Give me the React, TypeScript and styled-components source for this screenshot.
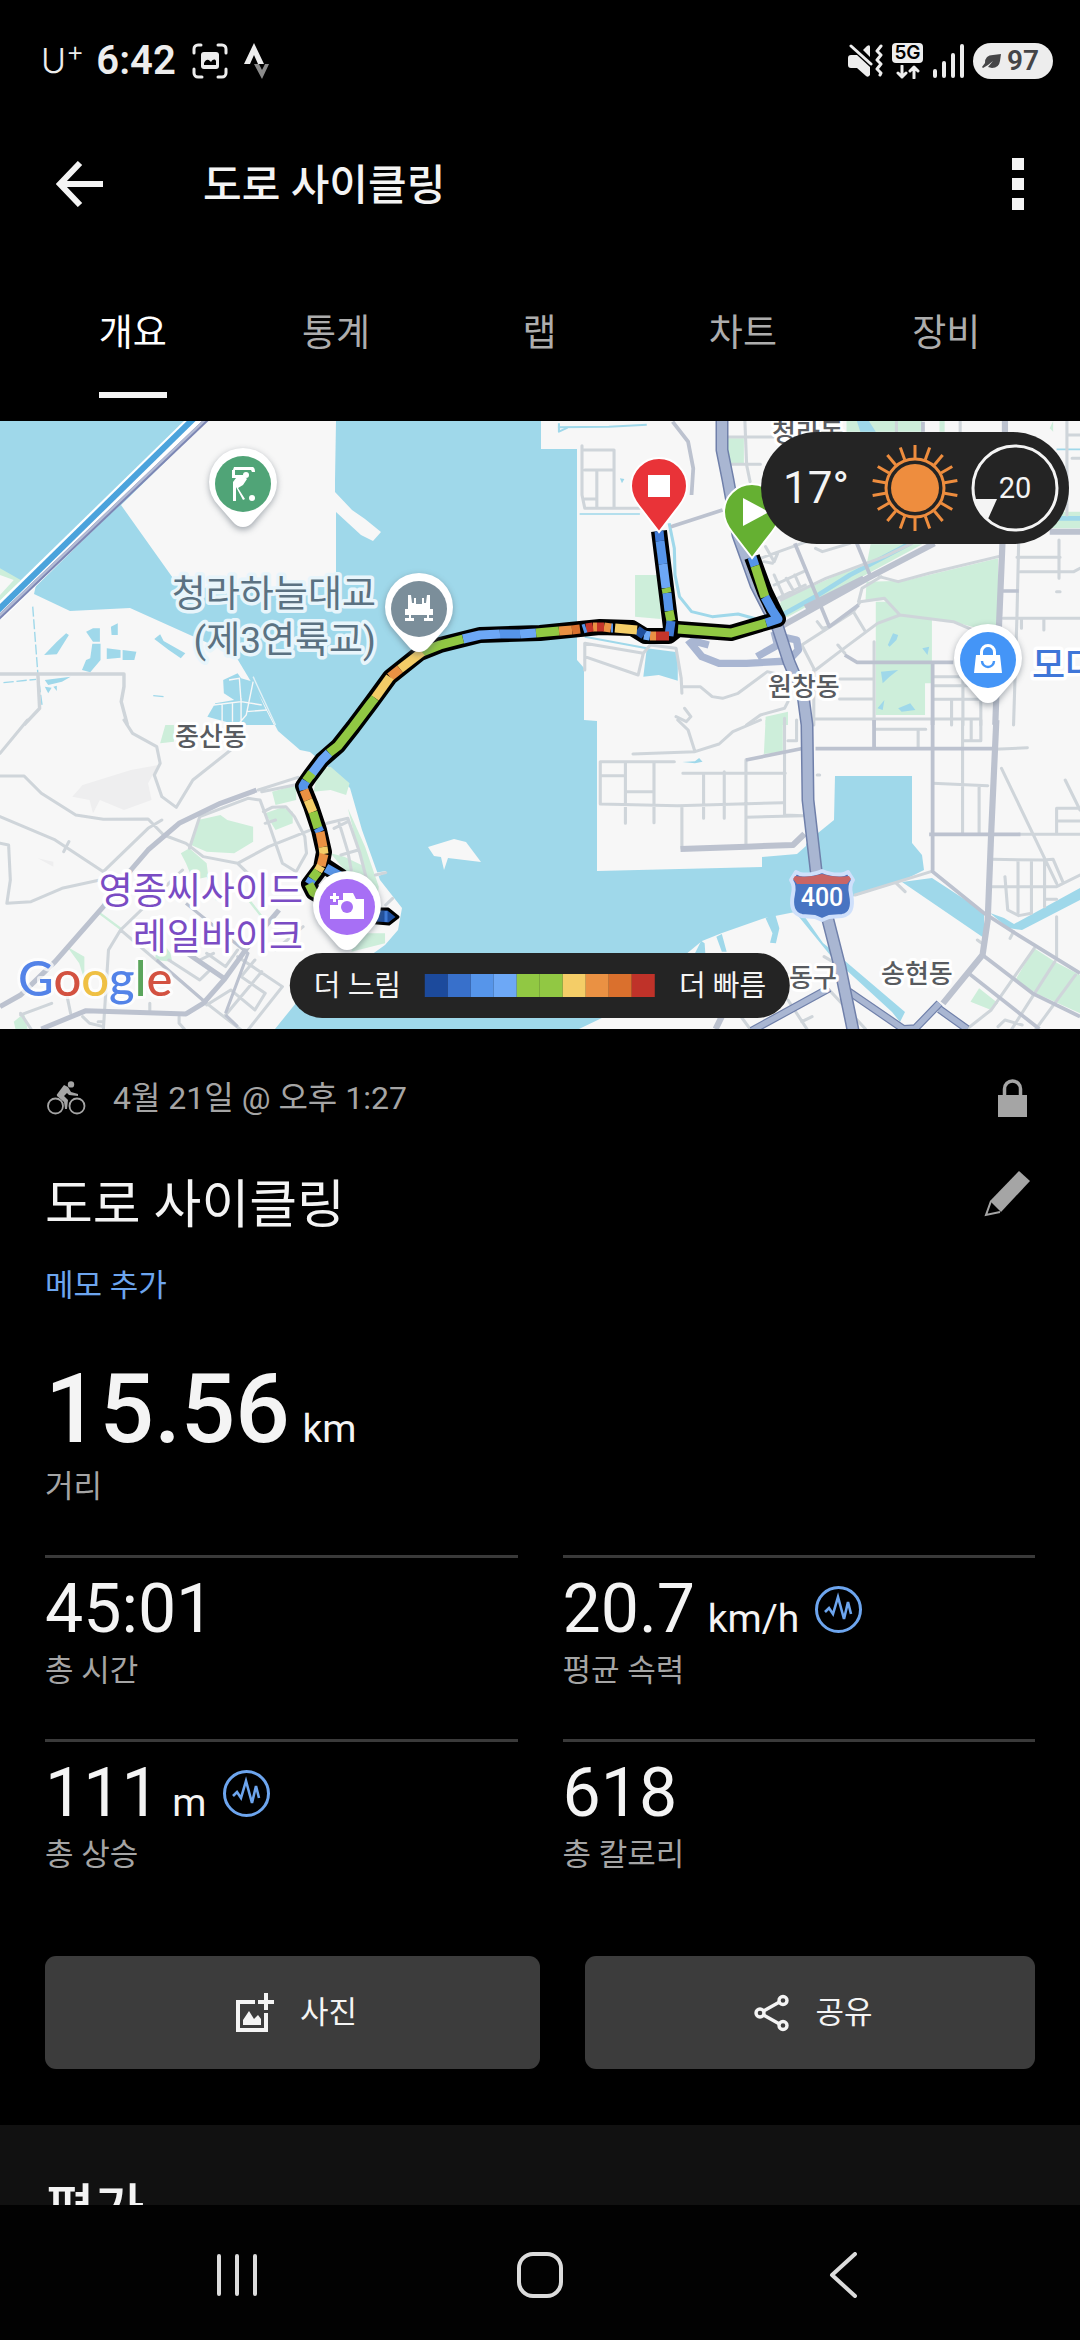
import React from "react";
import styled, { createGlobalStyle } from "styled-components";

const SANS = `Roboto, "Noto Sans CJK KR", sans-serif`;

const GlobalStyle = createGlobalStyle`
  *, *::before, *::after { box-sizing: border-box; }
  body { margin: 0; background: #000; color: #f4f4f4; font-family: ${SANS}; }
  button { font: inherit; color: inherit; background: none; border: 0; padding: 0; cursor: pointer; }
  h1, h2, p, dl, dt, dd { margin: 0; font-weight: inherit; font-size: inherit; }
  svg { display: block; flex: none; }
`;

const Screen = styled.div`
  display: flex;
  flex-direction: column;
  height: 100vh;
  overflow: hidden;
  background: #000;
`;

/* ---------- status bar ---------- */

const StatusBar = styled.div`
  flex: none;
  display: flex;
  align-items: center;
  justify-content: space-between;
  height: 102px;
  padding: 20px 27px 0 41px;
  color: #ededed;
`;

const StatusGroup = styled.div<{ $gap: number }>`
  display: flex;
  align-items: center;
  gap: ${(p) => p.$gap}px;
`;

const Carrier = styled.span`
  display: flex;
  font: 300 34px/44px Inter, sans-serif;
  margin-right: -4px;

  sup {
    font-size: 28px;
    line-height: 24px;
  }
`;

const Clock = styled.span`
  font: 600 40px/44px Roboto, sans-serif;
`;

const NetworkBadge = styled.span`
  display: flex;
  flex-direction: column;
  align-items: center;
  gap: 2px;

  b {
    width: 31px;
    border-radius: 4px;
    background: #ededed;
    color: #000;
    font: 600 19px/20px Inter, sans-serif;
    text-align: center;
  }
`;

const Battery = styled.span`
  display: flex;
  align-items: center;
  gap: 5px;
  height: 36px;
  padding: 0 14px 0 9px;
  border-radius: 18px;
  background: #ededed;
  color: #454547;
  font: 600 28px/36px Roboto, sans-serif;
`;

/* ---------- app bar and tabs ---------- */

const AppBar = styled.header`
  flex: none;
  display: flex;
  align-items: center;
  height: 164px;
  padding: 0 56px;
`;

const AppTitle = styled.h1`
  flex: 1;
  margin-left: 100px;
  padding-top: 4px;
  font-size: 42px;
  font-weight: 500;
  line-height: 60px;
`;

const IconButton = styled.button`
  display: flex;
  align-items: center;
  justify-content: center;
`;

const Tabs = styled.nav`
  flex: none;
  display: grid;
  grid-template-columns: repeat(5, 1fr);
  justify-items: center;
  height: 155px;
  padding: 41px 32px 0 31px;
`;

const Tab = styled.button<{ $active?: boolean }>`
  align-self: start;
  padding-bottom: 31px;
  border-bottom: 6px solid ${(p) => (p.$active ? "#f4f4f4" : "transparent")};
  color: ${(p) => (p.$active ? "#ffffff" : "#adadad")};
  font-size: 37px;
  line-height: 54px;
`;

/* ---------- map ---------- */

const MapPanel = styled.section`
  position: relative;
  flex: none;
  height: 608px;
  overflow: hidden;
  background: #f7f7f7;
`;

const MapCanvas = styled.svg`
  width: 100%;
  height: 100%;
  font-family: ${SANS};
`;

const Weather = styled.div`
  position: absolute;
  top: 11px;
  right: 11px;
  display: flex;
  align-items: center;
  height: 112px;
  padding: 0 10px 0 22px;
  border-radius: 56px;
  background: #242424;
`;

const Temperature = styled.span`
  width: 88px;
  font-size: 44px;
  line-height: 52px;
`;

const Wind = styled.span`
  display: grid;
  place-items: center;
  margin-left: 12px;
  font-size: 29px;
  line-height: 34px;

  > * {
    grid-area: 1 / 1;
  }
`;

const Legend = styled.div`
  position: absolute;
  bottom: 11px;
  left: 50%;
  display: flex;
  align-items: center;
  gap: 24px;
  height: 65px;
  padding: 0 24px;
  border-radius: 33px;
  background: #242424;
  font-size: 29px;
  line-height: 40px;
  white-space: nowrap;
  transform: translateX(-50%);
`;

const Scale = styled.span`
  display: flex;
`;

const Swatch = styled.i<{ $color: string }>`
  width: 23px;
  height: 23px;
  background: ${(p) => p.$color};
`;

/* ---------- activity details ---------- */

const Details = styled.main`
  flex: 1;
  min-height: 0;
  overflow: hidden;
`;

const Summary = styled.section`
  padding: 45px 45px 56px;
`;

const Row = styled.div`
  display: flex;
  align-items: center;
  justify-content: space-between;
`;

const Meta = styled.p`
  display: flex;
  align-items: center;
  gap: 27px;
  padding-left: 2px;
  color: #a5a5a5;
  font-size: 32px;
  line-height: 48px;
`;

const IconSlot = styled.span<{ $right: number; $lift?: number }>`
  display: flex;
  padding: 0 ${(p) => p.$right}px ${(p) => p.$lift ?? 0}px 0;
`;

const ActivityName = styled.h2`
  font-size: 52px;
  line-height: 72px;
`;

const TitleRow = styled(Row)`
  margin-top: 48px;
`;

const NoteButton = styled.button`
  display: block;
  margin-top: 22px;
  color: #6da5ee;
  font-size: 31px;
  line-height: 44px;
`;

const Stat = styled.div`
  display: flex;
  flex-direction: column-reverse;
  justify-content: flex-end;
`;

const StatLabel = styled.dt`
  color: #a5a5a5;
  font-size: 31px;
  line-height: 44px;
`;

const Distance = styled.dd`
  font-size: 96px;
  font-weight: 500;
  line-height: 112px;
`;

const Value = styled.dd`
  display: flex;
  align-items: baseline;
  font-size: 68px;
  line-height: 80px;

  button {
    align-self: center;
    margin-left: 16px;
  }
`;

const Unit = styled.span`
  margin-left: 3px;
  font-size: 39px;
  font-weight: 400;
  line-height: 40px;
  white-space: pre;
`;

const Headline = styled.dl`
  margin-top: 45px;
`;

const StatGrid = styled.dl`
  display: grid;
  grid-template-columns: 1fr 1fr;
  grid-auto-rows: 184px;
  column-gap: 45px;
  margin-top: 46px;

  ${Stat} {
    padding-top: 11px;
    border-top: 3px solid #3a3a3a;
  }
`;

const Actions = styled.div`
  display: grid;
  grid-template-columns: 11fr 10fr;
  gap: 45px;
  margin-top: 33px;
`;

const ActionButton = styled.button`
  display: flex;
  align-items: center;
  justify-content: center;
  gap: 26px;
  height: 113px;
  padding-left: 7px;
  border-radius: 11px;
  background: #3c3c3c;
  font-size: 31px;
  line-height: 44px;
`;

const Rating = styled.section`
  min-height: 200px;
  padding: 48px 45px;
  background: #111111;
`;

const RatingTitle = styled.h2`
  font-size: 54px;
  font-weight: 500;
  line-height: 76px;
`;

const SystemNav = styled.footer`
  flex: none;
  display: grid;
  grid-template-columns: repeat(3, 303px);
  justify-content: center;
  align-items: center;
  height: 135px;
  padding-top: 4px;
  background: #020202;
`;

/* ---------- icons ---------- */

const CaptureIcon = () => (
  <svg width="36" height="36" viewBox="0 0 36 36" fill="none" stroke="#ededed" strokeWidth="3" strokeLinecap="round">
    <path d="M2 10V6a4 4 0 0 1 4-4h3M26 2h4a4 4 0 0 1 4 4v4M34 26v4a4 4 0 0 1-4 4h-4M10 34H6a4 4 0 0 1-4-4v-4" />
    <rect x="9" y="9" width="18" height="17" rx="3" fill="#ededed" stroke="none" />
    <path d="M12 22v-2c2-4 4-4 6-2l1 1c2-3 4-3 5-1v4z" fill="#000" stroke="none" />
  </svg>
);

const StravaIcon = () => (
  <svg width="26" height="36" viewBox="0 0 26 36">
    <path d="M10 0l10 21h-6l-4-9-4 9H0z" fill="#ededed" />
    <path d="M10 21h5l3 6 3-6h4l-7 15z" fill="#8a8a8a" />
  </svg>
);

const MuteIcon = () => (
  <svg width="36" height="34" viewBox="0 0 36 34" fill="#ededed">
    <path d="M1 14q0-3 3-3h6l13 12v8q-2 3-4 1l-9-8H4q-3 0-3-3z" />
    <path d="M16 6l4-4q3-2 3 1v10z" />
    <path d="M4 2l20 18" stroke="#ededed" strokeWidth="3" strokeLinecap="round" />
    <path d="M34 2l-4 5 4 4-4 5 4 4-4 5 4 4-1 2" fill="none" stroke="#ededed" strokeWidth="3" strokeLinecap="round" strokeLinejoin="round" />
  </svg>
);

const DataArrows = () => (
  <svg width="24" height="14" viewBox="0 0 24 14" fill="none" stroke="#ededed" strokeWidth="3" strokeLinecap="round" strokeLinejoin="round">
    <path d="M6 1v11M2 8l4 4 4-4M18 13V2M14 6l4-4 4 4" />
  </svg>
);

const SignalIcon = () => (
  <svg width="32" height="34" viewBox="0 0 32 34" stroke="#ededed" strokeWidth="4" strokeLinecap="round">
    <path d="M3 27v5M12 19v13M21 11v21M30 2v30" />
  </svg>
);

const LeafIcon = () => (
  <svg width="20" height="15" viewBox="0 0 20 15">
    <path d="M3 9Q3 1 11 1l8-1-1 7q-1 7-8 7l-4-1 5-6-5 4-5 3-1-1z" fill="#454547" />
  </svg>
);

const BackIcon = () => (
  <svg width="47" height="46" viewBox="0 0 47 46" fill="none" stroke="#f4f4f4" strokeWidth="6">
    <path d="M24 2L4 23l20 21M4 23h43" />
  </svg>
);

const MoreIcon = () => (
  <svg width="12" height="52" viewBox="0 0 12 52" fill="#f4f4f4">
    <path d="M0 0h12v12H0zM0 20h12v12H0zM0 40h12v12H0z" />
  </svg>
);

const SunIcon = () => (
  <svg width="88" height="88" viewBox="-44 -44 88 88" stroke="#ee8d3e" fill="none">
    <circle r="24" fill="#ee8d3e" stroke="none" />
    <circle r="29" strokeWidth="3" />
    {Array.from({ length: 18 }, (_, i) => (
      <path key={i} d="M0-30V-43" strokeWidth="3" transform={`rotate(${i * 20})`} />
    ))}
  </svg>
);

const CompassIcon = () => (
  <svg width="88" height="88" viewBox="-44 -44 88 88">
    <circle r="42" fill="none" stroke="#f4f4f4" strokeWidth="3" />
    <path d="M-41 11H-18L-27 31Q-37 24-41 11z" fill="#f4f4f4" />
  </svg>
);

const BikeIcon = () => (
  <svg width="39" height="34" viewBox="0 0 39 34" fill="none" stroke="#a5a5a5">
    <circle cx="8.5" cy="25" r="7.5" strokeWidth="1.8" />
    <circle cx="30" cy="25" r="7.5" strokeWidth="1.8" />
    <circle cx="24" cy="3.4" r="3.2" fill="#a5a5a5" stroke="none" />
    <path d="M17 4l4 2 3 5 7 2v2l-9-1-2-2-3 3 4 4-1 9h-2l-1-7-7-6q-1-1 1-3z" fill="#a5a5a5" stroke="none" />
  </svg>
);

const LockIcon = () => (
  <svg width="29" height="38" viewBox="0 0 29 38">
    <path d="M0 16h29v22H0z" fill="#a5a5a5" />
    <path d="M6.500 18v-8a8 8 0 0 1 16 0v8" fill="none" stroke="#a5a5a5" strokeWidth="3.500" />
  </svg>
);

const PencilIcon = () => (
  <svg width="46" height="46" viewBox="0 0 46 46">
    <path d="M35 0l11 10-29 31-11-11z" fill="#a5a5a5" />
    <path d="M7 30L2 44l14-3" fill="none" stroke="#a5a5a5" strokeWidth="2" />
  </svg>
);

const PulseIcon = () => (
  <svg width="47" height="47" viewBox="0 0 47 47" fill="none" stroke="#6da5ee" strokeWidth="3">
    <circle cx="23.500" cy="23.500" r="22" />
    <path d="M10 26l4-4 4 6 5-17 6 22 4-17 3 12" strokeWidth="2.600" />
  </svg>
);

const PhotoIcon = () => (
  <svg width="39" height="40" viewBox="0 0 39 40" fill="none" stroke="#f4f4f4" strokeWidth="4">
    <path d="M20 9H3v28h28V20" />
    <path d="M31 0v17M23 9h16" />
    <path d="M8 32v-5l6-9 5 8 4-4 3 4v6z" fill="#f4f4f4" stroke="none" />
  </svg>
);

const ShareIcon = () => (
  <svg width="35" height="38" viewBox="0 0 35 38" fill="none" stroke="#f4f4f4" strokeWidth="3.400">
    <circle cx="29" cy="6.500" r="4" />
    <circle cx="6" cy="19" r="4" />
    <circle cx="29" cy="31.500" r="4" />
    <path d="M9.500 17l16-9M9.500 21l16 9" />
  </svg>
);

const navStroke = { fill: "none", stroke: "#dcdcdc", strokeWidth: 4, strokeLinecap: "round" } as const;

/* ---------- map drawing ---------- */

const BLUE_DARK = "#1f4f9e";
const BLUE_MID = "#3f7ad6";
const BLUE = "#5695ea";
const BLUE_LIGHT = "#6da8f6";
const GREEN = "#91c843";
const YELLOW = "#f4cd67";
const ORANGE = "#ea9143";
const RUST = "#da702d";
const RED = "#c5352a";

const speedScale = ["#1c4a9c", "#3870cb", BLUE, BLUE_LIGHT, GREEN, GREEN, YELLOW, ORANGE, RUST, "#bf3229"];

const routeOutline = [
  "M659 531L671 628L669 636",
  "M752 557L765 592L778 619L731 633L678 629L669 636L645 636L632 628L600 627L540 633L480 635L440 645L420 653L390 677L371 703L353 727L338 746L322 760L310 776L303 786L311 806L319 830L324 852L321 868L309 884L313 892L330 902L360 915",
  "M325 866L340 876L352 886",
];

const routePieces: [string, string][] = [
  [BLUE_MID, "M659 531L660 541"],
  [BLUE, "M660 541L663 564"],
  [BLUE_LIGHT, "M663 564L666 588"],
  [GREEN, "M666 588L667 593"],
  [BLUE, "M667 593L669 611"],
  [GREEN, "M669 611L671 621"],
  [BLUE, "M752 557L755 566"],
  [GREEN, "M755 566L765 597"],
  [BLUE, "M765 597L772 610L778 619L766 623"],
  [GREEN, "M766 623L731 633L678 629"],
  [BLUE_MID, "M671 621L669 636"],
  [RED, "M669 636L656 636"],
  [ORANGE, "M656 636L650 636"],
  [BLUE_LIGHT, "M650 636L644 635"],
  [BLUE_DARK, "M644 635L637 630"],
  [YELLOW, "M637 630L615 628"],
  [BLUE, "M613 628L611 628"],
  [ORANGE, "M611 628L604 627"],
  [RED, "M604 627L597 627"],
  [ORANGE, "M597 627L593 627"],
  [RED, "M593 627L586 628"],
  [BLUE, "M586 628L583 629"],
  [RUST, "M580 629L572 630"],
  [ORANGE, "M572 630L559 631"],
  [GREEN, "M559 631L536 633"],
  [BLUE_LIGHT, "M536 633L520 634"],
  [BLUE, "M520 634L500 634"],
  [BLUE_LIGHT, "M500 634L480 635L463 639"],
  [GREEN, "M463 639L440 645L422 652"],
  [YELLOW, "M422 652L400 669"],
  [ORANGE, "M400 669L390 677"],
  [YELLOW, "M390 677L375 698"],
  [GREEN, "M375 698L371 703L353 727L338 746L329 753"],
  [BLUE_LIGHT, "M329 753L322 760L310 776"],
  [GREEN, "M312 773L306 781"],
  [BLUE, "M306 781L303 786L304 790"],
  [ORANGE, "M304 790L308 800"],
  [YELLOW, "M308 800L313 812"],
  [GREEN, "M313 812L318 828"],
  [BLUE, "M318 828L320 832"],
  [ORANGE, "M320 832L323 847"],
  [YELLOW, "M323 847L324 854"],
  [ORANGE, "M324 854L321 866"],
  [YELLOW, "M321 866L318 871"],
  [GREEN, "M318 871L312 879"],
  [BLUE, "M312 879L309 884"],
  [GREEN, "M309 884L313 892L330 902"],
  [BLUE, "M326 868L340 876"],
  [GREEN, "M340 876L352 886"],
];

const Pin = ({ x, y, color, children }: { x: number; y: number; color: string; children: React.ReactNode }) => (
  <g transform={`translate(${x} ${y})`}>
    <path d="M0 46q-8 0-12-7L-24 24A34 34 0 1 1 24 24L12 39Q8 46 0 46z" fill="#55606c" opacity="0.5" filter="url(#shade)" />
    <path d="M0 43q-6 0-10-5L-24 22A34 34 0 1 1 24 22L10 38Q6 43 0 43z" fill="#fff" />
    <circle r="28" fill={color} />
    <g fill="#fff">{children}</g>
  </g>
);

const Flag = ({ x, y, color, children }: { x: number; y: number; color: string; children: React.ReactNode }) => (
  <g transform={`translate(${x} ${y})`}>
    <path d="M0 46L-20 20Q-28 10-28 0A28 28 0 0 1 28 0Q28 10 20 20z" fill={color} stroke="#fff" strokeWidth="2" />
    {children}
  </g>
);

const ActivityMap = () => (
  <MapCanvas viewBox="0 421 1080 608" preserveAspectRatio="xMidYMid slice" role="img" aria-label="지도">
    <defs>
      <filter id="shade" x="-30%" y="-30%" width="160%" height="160%">
        <feGaussianBlur stdDeviation="3" />
      </filter>
    </defs>
    <rect x="0" y="421" width="1080" height="608" fill="#f7f7f7" />

    {/* sea and basins */}
    <g fill="#9fd8ea">
      <path d="M0 421H541V449H577V660L584 668V720L597 721V871L762 867V857L797 854L806 846V844L818 833L834 820L835 776H912V843L922 855L924 870L900 882L855 896L800 910L823 943L838 955L905 1012L900 1022L892 1012L830 955L795 912L765 918L722 933L702 941L685 955L660 990L579 1029H275L296 1003L350 970L385 945L398 930L402 908L380 880L362 830L350 788L328 767L310 752L300 750L278 731L262 700L235 655L190 635L130 608L70 611L34 594L36 585L0 600z" />
      <path d="M902 882L932 878L984 912L984 938zM990 913L1004 918L1014 924L1080 888V900L1022 930L1008 928z" />
    </g>
    <g fill="#f7f7f7">
      <path d="M207 421H336L335 480V492L352 510L365 519L381 532L373 541L361 535L336 512V587L180 588L121 505z" />
      <path d="M428 847L454 839L466 842L481 862L448 858L444 870L441 857L434 856z" />
      <path d="M374 873L386 871 386 873 376 877z" />
    </g>

    {/* north-west quarter */}
    <g transform="translate(0 415) scale(.3444 .3333)" fill="none">
      <path d="M0 460L60 495L0 565z" fill="#cdeeda" />
      <path d="M0 480L40 495L0 540z" fill="#f7f7f7" />
      <g fill="#9fd8ea">
        <path d="M128 720L165 680L192 655L200 660L165 718zM250 650L270 640H290V680H270zM268 686H292V735L262 772L238 765L250 735L262 730zM310 700L350 705V728L310 732zM356 705L396 710L390 735H356zM322 635L342 625V660H324zM448 672L465 658L475 678L538 715L525 730L490 705zM130 795L205 785L180 800L140 810zM130 815L150 818L140 835zM155 815L165 812V828z" />
        <path d="M648 795L690 775L700 790L735 800L770 880L795 930H690L602 905L625 865L680 855L650 835z" />
      </g>
      <g stroke="#f7f7f7" strokeWidth="4">
        <path d="M665 795L695 790L700 860L620 870M700 860L760 870M645 865V930M675 865V920M700 850V930M735 800L715 900L690 930M715 890L775 885" />
      </g>
      <path d="M735 785L800 930" stroke="#e2f1f6" strokeWidth="4" />
      <path d="M95 575L110 777L122 870M10 803L105 793M445 842L475 845" stroke="#9fd8ea" strokeWidth="4" strokeDasharray="30 8" />
      <path d="M0 777H360V815L352 860L370 930M110 777L115 880L70 930" stroke="#cfd5da" strokeWidth="10" strokeLinejoin="round" />
      <path d="M-10 598L575 8" stroke="#fff" strokeWidth="44" />
      <path d="M-10 590L565 8" stroke="#4ba3dc" strokeWidth="18" />
      <path d="M-10 614L604 10" stroke="#7c86b4" strokeWidth="13" />
      <path d="M-10 610L600 10" stroke="#b3bbd4" strokeWidth="7" />
    </g>

    {/* north-east quarter */}
    <g transform="translate(540 415) scale(.3444 .3333)" fill="none" strokeLinejoin="round">
      <path
        fill="#cdeeda"
        d="M545 70H592V145H545zM276 480H350V612L276 605zM690 605L700 555L950 440L960 388H1110L720 605zM948 500L1060 497L1330 430V645H1290L1200 620L1045 600L1000 555L945 560zM975 560H1020L1045 600L1138 610V805H1118V900H975zM655 905L720 890V930H655zM890 18H1110V50H890zM1160 18H1175V50H1160zM1480 290H1568V340H1480zM1480 40L1490 18V50z"
      />
      <path
        fill="#9fd8ea"
        d="M310 700L400 712V797L345 780L300 785zM920 18H955L975 50H930zM1010 690L1025 655L1040 660L1035 675L1015 695zM1110 700L1130 695L1125 720zM990 770L1040 765L1015 785L995 805zM980 880L1000 855L995 885zM1040 880L1075 865L1090 885L1050 890zM232 190L245 192 238 205z"
      />
      <g stroke="#9fd8ea">
        <path d="M52 37L200 35L310 29" strokeWidth="6" />
        <path d="M55 25V50L80 38" strokeWidth="6" />
        <path d="M115 297H290M1500 103H1568" strokeWidth="5" />
        <path d="M375 325L390 400L392 480L405 545L440 590L500 605L575 597L650 618" strokeWidth="9" />
        <path d="M130 665L310 700" strokeWidth="6" />
        <path d="M700 602L800 545L900 480L1075 385M1480 310H1568" strokeWidth="14" />
      </g>
      <path
        stroke="#cfd5da"
        strokeWidth="9"
        strokeLinecap="round"
        d="M122 92V240L130 280H290M122 105H215V280M130 165H215M165 165V275M130 252H165M595 20L600 150L610 200M545 66H680M550 148H640M1390 375L1385 600L1375 930M1385 427H1510M1395 470H1550L1568 460M1507 375V490M1345 610H1568M1398 610V640M1463 610V645M655 395L680 440L690 415M650 440L675 445M680 510L765 470M690 550L770 510M680 480L710 550M715 490L740 535M740 480L755 515M640 430L800 370M800 400L820 410L900 385M700 555L830 490L1000 425L1080 385M985 485L1040 500L1130 475L1330 425M925 560L935 520L990 485M760 690L910 590L930 560L1000 550L1045 600L1200 620L1290 660M1045 600L980 625L870 710L800 765M910 590L945 650M865 690L885 715M130 765V685L300 715L285 780L130 725M300 715L320 690L395 700L410 790L412 835M412 815H465L500 845L530 850L575 835L660 770L700 780M420 880L438 905L425 920L395 905M870 792H970M870 852H970M970 680V930M1145 785H1290M1145 812H1290M1145 853H1285M1195 853V930M1228 785V930M1280 790V930M790 912H1280M710 910V930M760 690L795 760V930M720 860L710 880L640 900L600 930M1530 20V300M1545 130H1568M1530 60H1568M805 620L820 640L840 635M1500 530H1510M1035 20V50M1220 20V50"
      />
      <path
        stroke="#bcc2cf"
        strokeWidth="11"
        d="M385 20L430 80L445 160L440 240M380 335L530 285M885 720L920 742H1200M740 385L840 635L925 570M920 385L960 485M1340 528H1390M1140 740V930M1112 20V50"
      />
      <path stroke="#bcc2cf" strokeWidth="18" d="M1350 18V60M1343 380L1330 700L1322 930M690 640L950 490L1145 385M770 578L940 490M1480 350H1568" />
      <path stroke="#a9b6d2" strokeWidth="22" d="M430 675L470 725L520 745H600L720 738L750 705L745 675L700 665M435 675L490 690M630 725L690 690L680 650" />
    </g>

    {/* south-west quarter */}
    <g transform="translate(0 720) scale(.3444 .3333)" fill="none" strokeLinejoin="round">
      <path fill="#eeeeef" d="M210 230L240 195L380 150L460 135L430 190L440 240L360 270L290 240L270 280L260 240zM110 415L155 425V440z" />
      <path
        fill="#cdeeda"
        d="M575 300L640 285L660 300L735 320L735 365L680 400L600 395L555 375zM525 400L550 385L600 430L605 470L560 480L540 430zM790 215L860 195V240L800 255zM770 280L820 262L850 275V310L800 330zM925 150L960 140L1015 190L1005 225L960 210L910 215zM1010 265L1060 380L1100 500L1095 540L1065 480L1040 390zM480 15H505V65L465 70zM195 680L245 710V780L230 730zM960 400L1000 410L1060 440V500L1000 450zM1040 640H1118V670L1020 695zM40 905L70 880L80 927H45zM460 650L495 700L500 725L450 720z"
      />
      <path stroke="#cdeeda" strokeWidth="7" d="M290 580L355 630M700 510L760 590M600 460L630 540" />
      <path
        stroke="#cfd5da"
        strokeWidth="9"
        strokeLinecap="round"
        d="M0 168H70L120 220L220 285L300 298L430 297L475 345L540 370L590 410L690 430L735 475M80 0L0 100M360 0L385 40L455 80L465 130L448 165L470 230L512 262L560 180L670 90M0 290L160 360L300 455M185 395L200 365M0 370L25 375L30 480L20 550L90 545L180 505L290 480M300 455L430 325L470 300M550 385L580 290L720 235L755 240M755 240L780 310L820 430L860 455L890 400L885 350L855 290L830 260L790 262L765 275M770 310L800 300M690 430L780 380L950 310L1010 295L1045 400L1065 480M985 310L1010 395L1020 450M970 325L1010 305M990 405L1040 390M750 210L865 172M760 215L880 190M350 630L600 850L700 930M300 930L315 690L350 630L440 540L530 450M490 720L580 780L605 755M600 700L655 740L690 690M580 720L620 700M820 800L720 930M820 800L690 710M700 770L770 820L740 870M655 885L760 755M600 855L670 810L740 870M700 770L740 720M195 830L205 880M300 905H285M520 890V910L535 927M60 885L150 850M60 880L90 927M435 850V880M1090 465L1120 458M1120 555L1140 535M880 620L800 690M240 890L260 910L300 920"
      />
      <path
        stroke="#bcc2cf"
        strokeWidth="15"
        d="M0 860L60 825L160 725L300 560L380 450L430 390L520 310L640 250L745 210M120 927L250 872L540 882L590 850L650 780L720 680L810 570M530 690L650 775"
      />
      <path stroke="#bcc2cf" strokeWidth="9" d="M455 720L600 850M655 885L690 920M540 550L720 700L655 880" />
    </g>

    {/* south-east quarter */}
    <g transform="translate(540 720) scale(.3444 .3333)" fill="none" strokeLinejoin="round">
      <path
        fill="#cdeeda"
        d="M655 0H705V95L650 102zM1435 685L1495 725L1440 820L1380 780zM1495 725L1568 765V880L1440 820zM1275 805L1330 850L1310 870L1250 845z"
      />
      <path fill="#9fd8ea" d="M413 126L450 124L462 114L472 125L450 130zM655 595L682 580L695 625L685 670L668 668L675 640zM512 650L528 642L542 695H528zM468 662L478 670L480 700H450z" />
      <path
        stroke="#cfd5da"
        strokeWidth="9"
        strokeLinecap="round"
        d="M270 102L450 95L520 72L560 35L640 0M400 0L430 30L450 95M175 125H390M175 125V252M175 167H245M248 125V310M331 125V308M248 215H331M175 252L400 257L705 248M412 257V385M415 160H712M475 160V295M535 155V295M598 120V375M710 0V285L765 287M598 292L765 287M720 62H745V0M975 28H1120M1098 28V85M1227 0V340M1252 0V62M1280 0V62H1232M1140 190L1300 197M1275 197V340M1320 88L1415 83M1340 145L1500 490M1525 180L1568 270M1500 340V265H1568M1500 303H1568M1390 343H1568M1312 418L1460 420L1490 418L1520 490M1388 420V580M1427 425V580M1350 470L1358 570L1390 587L1427 580M1312 500H1500L1568 465M1465 420V560M1500 590V710M1465 538H1500M915 525L1135 455M1035 490L1060 515M1435 685L1310 870L1240 927M1495 725L1370 927M1555 765L1440 927M1330 920L1350 900L1400 915M580 885L610 927M720 840L775 927M840 810L945 927M825 710L850 725M1270 660L1290 675M1365 655L1375 635M760 905L790 890M805 165H812"
      />
      <path
        stroke="#bcc2cf"
        strokeWidth="11"
        d="M800 86H1320M1140 0V455L1290 580L1380 640L1568 760M1130 343H1395M598 120L765 85M970 0V85M1285 705L1430 820L1568 890M1245 760L1450 927"
      />
      <path stroke="#bcc2cf" strokeWidth="18" d="M1325 0L1310 340L1300 600L1285 705L1170 850M408 387L600 380M600 380L735 375L768 342M530 885L510 927" />
      <path stroke="#7080aa" strokeWidth="24" d="M615 932L840 805M890 810L1055 927L1090 925L1160 850M1160 868L1240 927" />
      <path stroke="#a9b6d2" strokeWidth="17" d="M615 932L840 805M890 810L1055 927L1090 925L1160 850M1160 868L1240 927" />
    </g>

    {/* expressway 400 */}
    <g fill="none" strokeLinejoin="round">
      {[
        ["#7080aa", 13],
        ["#a9b6d2", 10],
      ].map(([stroke, width]) => (
        <path
          key={stroke}
          stroke={stroke as string}
          strokeWidth={width}
          d="M722 415V450L728 480L738 535L756 585L778 628L789 662L803 695L807 725L808 800L816 870L828 920L840 967L854 1035"
        />
      ))}
    </g>
    <g strokeLinejoin="round">
      <path d="M796 872l4 2q10 2 22-3 12 5 22 3l4-2 5 8q-4 6-2 14 4 20-9 22l-13 1-7 3-7-3-13-1q-13-3-9-22 2-8-2-14z" fill="#4874c2" stroke="#cfe0fb" strokeWidth="4" />
      <path d="M795 876q14 2 27-2 13 4 27 2l2 3-4 5h-50l-4-5z" fill="#c96565" />
      <text x="822" y="906" fill="#fff" fontSize="25" fontWeight="500" textAnchor="middle">400</text>
    </g>

    {/* place names */}
    <g fontSize="26" fontWeight="500" fill="#585b60" stroke="#fff" strokeWidth="6" strokeLinejoin="round" paintOrder="stroke">
      <text x="175" y="746">중산동</text>
      <text x="768" y="696">원창동</text>
      <text x="772" y="442">청라동</text>
      <text x="789" y="987">동구</text>
      <text x="881" y="983">송현동</text>
    </g>
    <g fontSize="37" fill="#5b7282" stroke="#e8f5fb" strokeWidth="7" strokeLinejoin="round" paintOrder="stroke" textAnchor="end">
      <text x="376" y="607">청라하늘대교</text>
      <text x="376" y="653">(제3연륙교)</text>
    </g>
    <g fontSize="37" fill="#7a4cc4" stroke="#fff" strokeWidth="7" strokeLinejoin="round" paintOrder="stroke" textAnchor="end">
      <text x="303" y="904">영종씨사이드</text>
      <text x="303" y="950">레일바이크</text>
    </g>
    <text x="1032" y="678" fontSize="36" fontWeight="500" fill="#3f76d8" stroke="#fff" strokeWidth="7" strokeLinejoin="round" paintOrder="stroke">
      모다
    </text>
    <text x="18" y="996" fontFamily="Lato, sans-serif" fontSize="49" fontWeight="500" stroke="#fff" strokeOpacity="0.7" strokeWidth="6" strokeLinejoin="round" paintOrder="stroke">
      <tspan fill="#5383e8">G</tspan>
      <tspan fill="#d35241">o</tspan>
      <tspan fill="#efc044">o</tspan>
      <tspan fill="#5383e8">g</tspan>
      <tspan fill="#5ba55c">l</tspan>
      <tspan fill="#d35241">e</tspan>
    </text>

    {/* recorded route, coloured by speed */}
    <g fill="none" strokeLinejoin="round">
      <g stroke="#000" strokeWidth="16">
        {routeOutline.map((d) => (
          <path key={d} d={d} />
        ))}
      </g>
      <g strokeWidth="9">
        {routePieces.map(([color, d]) => (
          <path key={d} d={d} stroke={color} />
        ))}
      </g>
      <path d="M365 909H388L398 917L389 924L365 922z" fill={BLUE_DARK} stroke="#000" strokeWidth="3" />
      <path d="M386 911V922" stroke={BLUE_MID} strokeWidth="3" />
    </g>

    <Flag x={752} y={512} color="#65b032">
      <path d="M-9-14V14L17 0z" fill="#fff" />
    </Flag>
    <Flag x={659} y={486} color="#e93338">
      <path d="M-11-11H11V11H-11z" fill="#fff" />
    </Flag>

    <Pin x={243} y={484} color="#50a477">
      <path d="M-9-17H10q2 1 2 5H9l-1-2H-8v5h8l4 4-4 6-5 3L2 15l-2 1-7-13V17h-3V-2l3-4h-4V-14h1z" />
      <circle cx="3" cy="-9" r="3" />
      <circle cx="9" cy="14" r="3" />
    </Pin>
    <Pin x={419} y={609} color="#7b8e9a">
      <path d="M-11-14h3l1 8h2v-5h2v6h6v-6h2v5h2l1-8h3V0h3V6h-4v3h4v3H5V9h3V6H-8V9h3v3h-9V9h4V6h-4V0h3z" />
    </Pin>
    <Pin x={347} y={907} color="#a76ff5">
      <path d="M-17-2h8v-5h5v-7H6l3 6h8V12H-17z" />
      <path d="M-14-14h3v3h3v3h-3v3h-3v-3h-3v-3h3z" />
      <circle r="6" fill="#a76ff5" />
    </Pin>
    <Pin x={988} y={660} color="#4495f7">
      <path d="M-12-5h4v-3a8 8 0 0 1 16 0v3h4l2 18h-28zM-5-5H5v-3a5 5 0 0 0-10 0z" fillRule="evenodd" />
      <path d="M-6 1a6 6 0 0 0 12 0" fill="none" stroke="#4495f7" strokeWidth="2.400" />
    </Pin>
  </MapCanvas>
);

/* ---------- screen ---------- */

const tabs = ["개요", "통계", "랩", "차트", "장비"];

const stats = [
  { label: "총 시간", value: "45:01" },
  { label: "평균 속력", value: "20.7", unit: " km/h", chart: true },
  { label: "총 상승", value: "111", unit: " m", chart: true },
  { label: "총 칼로리", value: "618" },
];

export default function App() {
  return (
    <Screen>
      <GlobalStyle />
      <StatusBar>
        <StatusGroup $gap={16}>
          <Carrier>
            U<sup>+</sup>
          </Carrier>
          <Clock>6:42</Clock>
          <CaptureIcon />
          <StravaIcon />
        </StatusGroup>
        <StatusGroup $gap={9}>
          <MuteIcon />
          <NetworkBadge>
            <b>5G</b>
            <DataArrows />
          </NetworkBadge>
          <SignalIcon />
          <Battery>
            <LeafIcon />
            97
          </Battery>
        </StatusGroup>
      </StatusBar>

      <AppBar>
        <IconButton aria-label="뒤로">
          <BackIcon />
        </IconButton>
        <AppTitle>도로 사이클링</AppTitle>
        <IconButton aria-label="더보기">
          <MoreIcon />
        </IconButton>
      </AppBar>

      <Tabs>
        {tabs.map((name, i) => (
          <Tab key={name} $active={i === 0}>
            {name}
          </Tab>
        ))}
      </Tabs>

      <MapPanel>
        <ActivityMap />
        <Weather>
          <Temperature>17°</Temperature>
          <SunIcon />
          <Wind>
            <CompassIcon />
            <span>20</span>
          </Wind>
        </Weather>
        <Legend>
          더 느림
          <Scale>
            {speedScale.map((color, i) => (
              <Swatch key={i} $color={color} />
            ))}
          </Scale>
          더 빠름
        </Legend>
      </MapPanel>

      <Details>
        <Summary>
          <Row>
            <Meta>
              <BikeIcon />
              4월 21일 @ 오후 1:27
            </Meta>
            <IconSlot $right={8}>
              <LockIcon />
            </IconSlot>
          </Row>
          <TitleRow>
            <ActivityName>도로 사이클링</ActivityName>
            <IconSlot $right={5} $lift={24}>
              <IconButton aria-label="이름 편집">
                <PencilIcon />
              </IconButton>
            </IconSlot>
          </TitleRow>
          <NoteButton>메모 추가</NoteButton>

          <Headline>
            <Stat>
              <StatLabel>거리</StatLabel>
              <Distance>
                15.56<Unit> km</Unit>
              </Distance>
            </Stat>
          </Headline>

          <StatGrid>
            {stats.map((s) => (
              <Stat key={s.label}>
                <StatLabel>{s.label}</StatLabel>
                <Value>
                  {s.value}
                  {s.unit && <Unit>{s.unit}</Unit>}
                  {s.chart && (
                    <IconButton aria-label={`${s.label} 차트`}>
                      <PulseIcon />
                    </IconButton>
                  )}
                </Value>
              </Stat>
            ))}
          </StatGrid>

          <Actions>
            <ActionButton>
              <PhotoIcon />
              사진
            </ActionButton>
            <ActionButton>
              <ShareIcon />
              공유
            </ActionButton>
          </Actions>
        </Summary>

        <Rating>
          <RatingTitle>평가</RatingTitle>
        </Rating>
      </Details>

      <SystemNav>
        <IconButton aria-label="최근 앱">
          <svg width="42" height="46" viewBox="0 0 42 46" {...navStroke}>
            <path d="M3 4v38M21 4v38M39 4v38" />
          </svg>
        </IconButton>
        <IconButton aria-label="홈">
          <svg width="46" height="46" viewBox="0 0 46 46" {...navStroke}>
            <rect x="2" y="2" width="42" height="42" rx="14" />
          </svg>
        </IconButton>
        <IconButton aria-label="뒤로 가기">
          <svg width="28" height="46" viewBox="0 0 28 46" strokeLinejoin="round" {...navStroke}>
            <path d="M26 2L3 23l23 21" />
          </svg>
        </IconButton>
      </SystemNav>
    </Screen>
  );
}
